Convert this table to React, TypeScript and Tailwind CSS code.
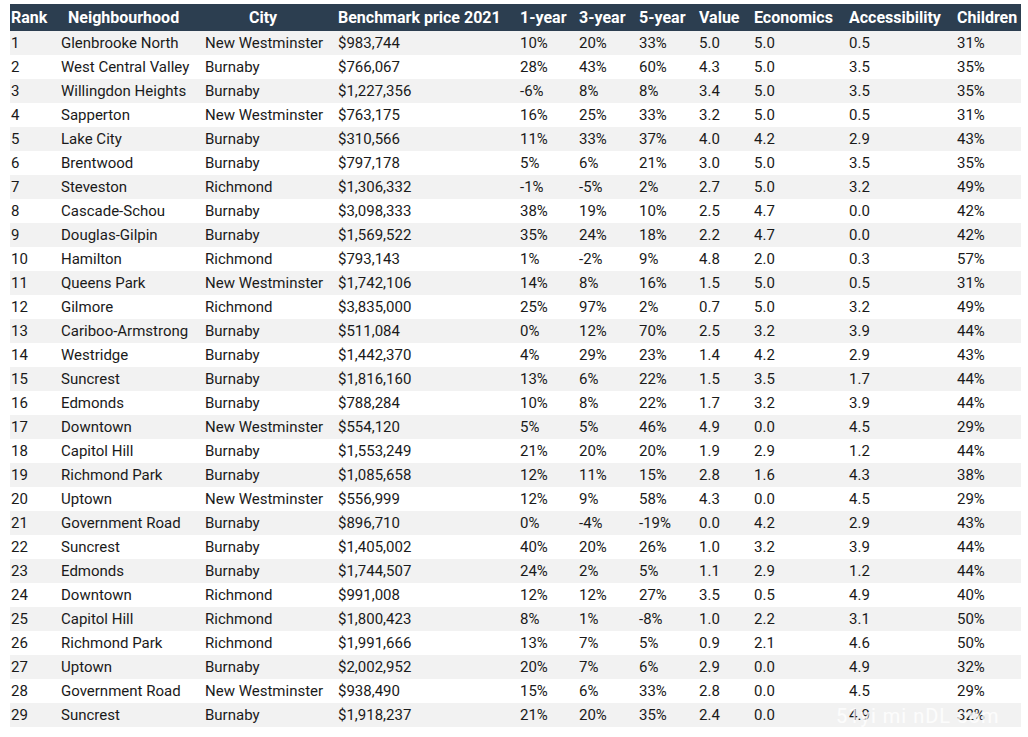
const rows: string[][] = [
  ['1', 'Glenbrooke North', 'New Westminster', '$983,744', '10%', '20%', '33%', '5.0', '5.0', '0.5', '31%'],
  ['2', 'West Central Valley', 'Burnaby', '$766,067', '28%', '43%', '60%', '4.3', '5.0', '3.5', '35%'],
  ['3', 'Willingdon Heights', 'Burnaby', '$1,227,356', '-6%', '8%', '8%', '3.4', '5.0', '3.5', '35%'],
  ['4', 'Sapperton', 'New Westminster', '$763,175', '16%', '25%', '33%', '3.2', '5.0', '0.5', '31%'],
  ['5', 'Lake City', 'Burnaby', '$310,566', '11%', '33%', '37%', '4.0', '4.2', '2.9', '43%'],
  ['6', 'Brentwood', 'Burnaby', '$797,178', '5%', '6%', '21%', '3.0', '5.0', '3.5', '35%'],
  ['7', 'Steveston', 'Richmond', '$1,306,332', '-1%', '-5%', '2%', '2.7', '5.0', '3.2', '49%'],
  ['8', 'Cascade-Schou', 'Burnaby', '$3,098,333', '38%', '19%', '10%', '2.5', '4.7', '0.0', '42%'],
  ['9', 'Douglas-Gilpin', 'Burnaby', '$1,569,522', '35%', '24%', '18%', '2.2', '4.7', '0.0', '42%'],
  ['10', 'Hamilton', 'Richmond', '$793,143', '1%', '-2%', '9%', '4.8', '2.0', '0.3', '57%'],
  ['11', 'Queens Park', 'New Westminster', '$1,742,106', '14%', '8%', '16%', '1.5', '5.0', '0.5', '31%'],
  ['12', 'Gilmore', 'Richmond', '$3,835,000', '25%', '97%', '2%', '0.7', '5.0', '3.2', '49%'],
  ['13', 'Cariboo-Armstrong', 'Burnaby', '$511,084', '0%', '12%', '70%', '2.5', '3.2', '3.9', '44%'],
  ['14', 'Westridge', 'Burnaby', '$1,442,370', '4%', '29%', '23%', '1.4', '4.2', '2.9', '43%'],
  ['15', 'Suncrest', 'Burnaby', '$1,816,160', '13%', '6%', '22%', '1.5', '3.5', '1.7', '44%'],
  ['16', 'Edmonds', 'Burnaby', '$788,284', '10%', '8%', '22%', '1.7', '3.2', '3.9', '44%'],
  ['17', 'Downtown', 'New Westminster', '$554,120', '5%', '5%', '46%', '4.9', '0.0', '4.5', '29%'],
  ['18', 'Capitol Hill', 'Burnaby', '$1,553,249', '21%', '20%', '20%', '1.9', '2.9', '1.2', '44%'],
  ['19', 'Richmond Park', 'Burnaby', '$1,085,658', '12%', '11%', '15%', '2.8', '1.6', '4.3', '38%'],
  ['20', 'Uptown', 'New Westminster', '$556,999', '12%', '9%', '58%', '4.3', '0.0', '4.5', '29%'],
  ['21', 'Government Road', 'Burnaby', '$896,710', '0%', '-4%', '-19%', '0.0', '4.2', '2.9', '43%'],
  ['22', 'Suncrest', 'Burnaby', '$1,405,002', '40%', '20%', '26%', '1.0', '3.2', '3.9', '44%'],
  ['23', 'Edmonds', 'Burnaby', '$1,744,507', '24%', '2%', '5%', '1.1', '2.9', '1.2', '44%'],
  ['24', 'Downtown', 'Richmond', '$991,008', '12%', '12%', '27%', '3.5', '0.5', '4.9', '40%'],
  ['25', 'Capitol Hill', 'Richmond', '$1,800,423', '8%', '1%', '-8%', '1.0', '2.2', '3.1', '50%'],
  ['26', 'Richmond Park', 'Richmond', '$1,991,666', '13%', '7%', '5%', '0.9', '2.1', '4.6', '50%'],
  ['27', 'Uptown', 'Burnaby', '$2,002,952', '20%', '7%', '6%', '2.9', '0.0', '4.9', '32%'],
  ['28', 'Government Road', 'New Westminster', '$938,490', '15%', '6%', '33%', '2.8', '0.0', '4.5', '29%'],
  ['29', 'Suncrest', 'Burnaby', '$1,918,237', '21%', '20%', '35%', '2.4', '0.0', '4.9', '32%'],
];

const headers = [
  { label: 'Rank', cls: 'pl-[1px]' },
  { label: 'Neighbourhood', cls: 'pl-[7px]' },
  { label: 'City', cls: 'pl-[44px]' },
  { label: 'Benchmark price 2021', cls: 'pl-0' },
  { label: '1-year', cls: 'pl-0' },
  { label: '3-year', cls: 'pl-0' },
  { label: '5-year', cls: 'pl-0' },
  { label: 'Value', cls: 'pl-0' },
  { label: 'Economics', cls: 'pl-0' },
  { label: 'Accessibility', cls: 'pl-0' },
  { label: 'Children', cls: 'pl-0' },
];

const cols = 'grid grid-cols-[51px_144px_133px_182px_59px_60px_60px_55px_95px_108px_64px]';

export default function App() {
  return (
    <div className="relative w-[1028px] h-[737px] bg-white pt-[4px] pl-[10px] font-['Roboto',sans-serif] overflow-hidden">
      <div className="w-[1011px]">
        {/* Header */}
        <div className={`${cols} h-[27px] items-center bg-[#2c3e50] text-white text-[16px] font-bold`}>
          {headers.map((h) => (
            <div key={h.label} className={`whitespace-nowrap ${h.cls}`}>
              {h.label}
            </div>
          ))}
        </div>

        {/* Body */}
        {rows.map((r, i) => (
          <div
            key={r[0]}
            className={`${cols} h-[24px] items-center text-[15px] leading-[22px] text-[#1a1a1a] ${i % 2 === 0 ? 'bg-[#f2f2f2]' : 'bg-white'}`}
          >
            {r.map((c, j) => (
              <div key={j} className={`whitespace-nowrap ${j === 0 ? 'pl-[1px]' : ''}`}>
                {c}
              </div>
            ))}
          </div>
        ))}
      </div>

      {/* Watermark */}
      <div className="absolute left-[836px] top-[704px] whitespace-nowrap text-[20px] leading-[24px] text-white/80 tracking-[1px] pointer-events-none">
        51yi mi nDL  com
      </div>
    </div>
  );
}
